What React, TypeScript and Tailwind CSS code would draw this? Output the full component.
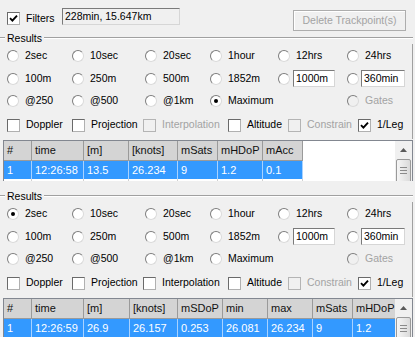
import React from "react";

type Cell = [string, string, string];

const topCols: Cell[] = [
  ["#", "1", "w-[28px]"],
  ["time", "12:26:58", "w-[52px]"],
  ["[m]", "13.5", "w-[45px]"],
  ["[knots]", "26.234", "w-[49px]"],
  ["mSats", "9", "w-[40px]"],
  ["mHDoP", "1.2", "w-[45px]"],
  ["mAcc", "0.1", "w-[40px]"],
];

const bottomCols: Cell[] = [
  ["#", "1", "w-[28px]"],
  ["time", "12:26:59", "w-[52px]"],
  ["[m]", "26.9", "w-[46px]"],
  ["[knots]", "26.157", "w-[48px]"],
  ["mSDoP", "0.253", "w-[45px]"],
  ["min", "26.081", "w-[45px]"],
  ["max", "26.234", "w-[45px]"],
  ["mSats", "9", "w-[40px]"],
  ["mHDoP", "1.2", "w-[45px]"],
];

function Circle({ on, off }: { on?: boolean; off?: boolean }) {
  return (
    <span
      className={`flex h-3 w-3 shrink-0 items-center justify-center rounded-full border border-t-[#7d7d7d] border-l-[#7d7d7d] border-r-[#dadada] border-b-[#dadada] ${
        off ? "bg-[#f0f0f0]" : "bg-white"
      }`}
    >
      {on && <span className="h-1 w-1 rounded-full bg-black" />}
    </span>
  );
}

function Box({ on, off }: { on?: boolean; off?: boolean }) {
  const cls = off
    ? "border-[#b4b4b4] bg-[#f0f0f0]"
    : "border-t-[#6a6a6a] border-l-[#6a6a6a] border-r-[#b0b0b0] border-b-[#b0b0b0] bg-white";
  return (
    <span className={`flex h-[13px] w-[13px] shrink-0 items-center justify-center border ${cls}`}>
      {on && (
        <svg width="9" height="9" viewBox="0 0 9 9" aria-hidden="true">
          <path d="M1 4.2 L3.4 6.6 L8 1.6" stroke="#000" strokeWidth="1.9" fill="none" />
        </svg>
      )}
    </span>
  );
}

function Edit({ text, w, ro }: { text: string; w: string; ro?: boolean }) {
  return (
    <div
      className={`h-[17px] shrink-0 border border-t-[#7a7a7a] border-l-[#7a7a7a] border-r-[#d6d6d6] border-b-[#d6d6d6] pl-[2px] leading-[15px] ${w} ${
        ro ? "bg-[#f0f0f0]" : "bg-white"
      }`}
    >
      {text}
    </div>
  );
}

function Opt({
  label,
  w,
  on,
  off,
  box,
  boxW,
  gap,
}: {
  label?: string;
  w: string;
  on?: boolean;
  off?: boolean;
  box?: string;
  boxW?: string;
  gap?: string;
}) {
  return (
    <div className={`flex shrink-0 items-center ${w}`}>
      <Circle on={on} off={off} />
      {label && <span className={`ml-[6px] ${off ? "text-[#a3a3a3]" : ""}`}>{label}</span>}
      {box && (
        <div className={gap}>
          <Edit text={box} w={boxW ?? ""} />
        </div>
      )}
    </div>
  );
}

function Check({ label, w, on, off }: { label: string; w: string; on?: boolean; off?: boolean }) {
  return (
    <div className={`flex shrink-0 items-center ${w}`}>
      <Box on={on} off={off} />
      <span className={`ml-[6px] ${off ? "text-[#a3a3a3]" : ""}`}>{label}</span>
    </div>
  );
}

function Etch({ w }: { w: string }) {
  return <span className={`h-[2px] border-t border-b border-t-[#a0a0a0] border-b-white ${w}`} />;
}

function Results({ top }: { top: boolean }) {
  return (
    <div className="w-[413px]">
      <div className="flex h-[12px] items-center">
        <Etch w="w-[5px]" />
        <span className="px-[2px] leading-none">Results</span>
        <Etch w="flex-1" />
      </div>
      <div className="border-r border-[#a0a0a0] pl-[7px]">
        <div className="flex h-[23px] items-center">
          <Opt label="2sec" w="w-[65px]" on={!top} />
          <Opt label="10sec" w="w-[73px]" />
          <Opt label="20sec" w="w-[65px]" />
          <Opt label="1hour" w="w-[68px]" />
          <Opt label="12hrs" w="w-[69px]" />
          <Opt label="24hrs" w="w-[60px]" />
        </div>
        <div className="flex h-[23px] items-center">
          <Opt label="100m" w="w-[65px]" />
          <Opt label="250m" w="w-[73px]" />
          <Opt label="500m" w="w-[65px]" />
          <Opt label="1852m" w="w-[68px]" />
          <Opt w="w-[69px]" box="1000m" boxW="w-[42px]" gap="ml-[3px]" />
          <Opt w="w-[60px]" box="360min" boxW="w-[44px]" gap="ml-[2px]" />
        </div>
        <div className="flex h-[21px] items-center">
          <Opt label="@250" w="w-[65px]" />
          <Opt label="@500" w="w-[73px]" />
          <Opt label="@1km" w="w-[65px]" />
          <Opt label="Maximum" w="w-[68px]" on={top} />
          <div className="w-[69px] shrink-0" />
          <Opt label="Gates" w="w-[60px]" off />
        </div>
        <div className="flex h-[28px] items-center">
          <Check label="Doppler" w="w-[65px]" />
          <Check label="Projection" w="w-[71px]" />
          <Check label="Interpolation" w="w-[85px]" off={top} />
          <Check label="Altitude" w="w-[60px]" />
          <Check label="Constrain" w="w-[70px]" off />
          <Check label="1/Leg" w="w-[45px]" on />
        </div>
      </div>
    </div>
  );
}

function Scroll() {
  return (
    <div className="flex w-[17px] shrink-0 flex-col bg-[#f0f0f0]">
      <div className="flex h-[18px] shrink-0 items-center justify-center">
        <svg width="7" height="4" viewBox="0 0 7 4" aria-hidden="true">
          <path d="M3.5 0 L7 4 L0 4 Z" fill="#5a5a5a" />
        </svg>
      </div>
      <div className="mx-[1px] flex h-[32px] shrink-0 flex-col items-center gap-[2px] rounded-[2px] border border-[#9a9a9a] bg-gradient-to-r from-[#f6f6f6] to-[#dadada] pt-[7px]">
        <span className="h-px w-[7px] bg-[#8a8a8a]" />
        <span className="h-px w-[7px] bg-[#8a8a8a]" />
        <span className="h-px w-[7px] bg-[#8a8a8a]" />
      </div>
    </div>
  );
}

function Grid({ cols }: { cols: Cell[] }) {
  return (
    <div className="ml-[3px] flex h-[41px] w-[410px] overflow-hidden border-x border-t border-[#828790] bg-white text-[11px]">
      <div className="flex min-w-0 flex-1 overflow-hidden">
        {cols.map(([h, v, w]) => (
          <div key={h} className={`flex shrink-0 flex-col ${w}`}>
            <div className="h-[20px] border-b border-r border-[#9a9a9a] bg-[#d4d4d4] px-[3px] leading-[19px] text-[#111]">
              {h}
            </div>
            <div className="h-[18px] border-r border-[#a9d2ff] bg-[#3399ff] px-[3px] leading-[18px] text-white">
              {v}
            </div>
            <div className="h-[18px] border-r border-[#d0d0d0]" />
          </div>
        ))}
      </div>
      <Scroll />
    </div>
  );
}

export default function App() {
  return (
    <div className="h-[337px] w-[415px] overflow-hidden bg-[#f0f0f0] font-['Liberation_Sans',Arial,sans-serif] text-[10.5px] text-black">
      <div className="flex h-[32px] items-start">
        <div className="ml-[7px] mt-[11px] flex w-[55px] shrink-0 items-center">
          <Box on />
          <span className="ml-[6px]">Filters</span>
        </div>
        <div className="mt-[8px]">
          <Edit text="228min, 15.647km" w="w-[118px]" ro />
        </div>
        <button
          type="button"
          className="ml-auto mr-[9px] mt-[10px] h-[21px] w-[113px] border border-[#adadad] bg-[#f0f0f0] text-[#a3a3a3] shadow-[inset_1px_1px_0_#fff]"
        >
          Delete Trackpoint(s)
        </button>
      </div>
      <Results top />
      <div className="mt-px">
        <Grid cols={topCols} />
      </div>
      <div className="h-[9px]" />
      <Results top={false} />
      <div className="mt-px">
        <Grid cols={bottomCols} />
      </div>
    </div>
  );
}
